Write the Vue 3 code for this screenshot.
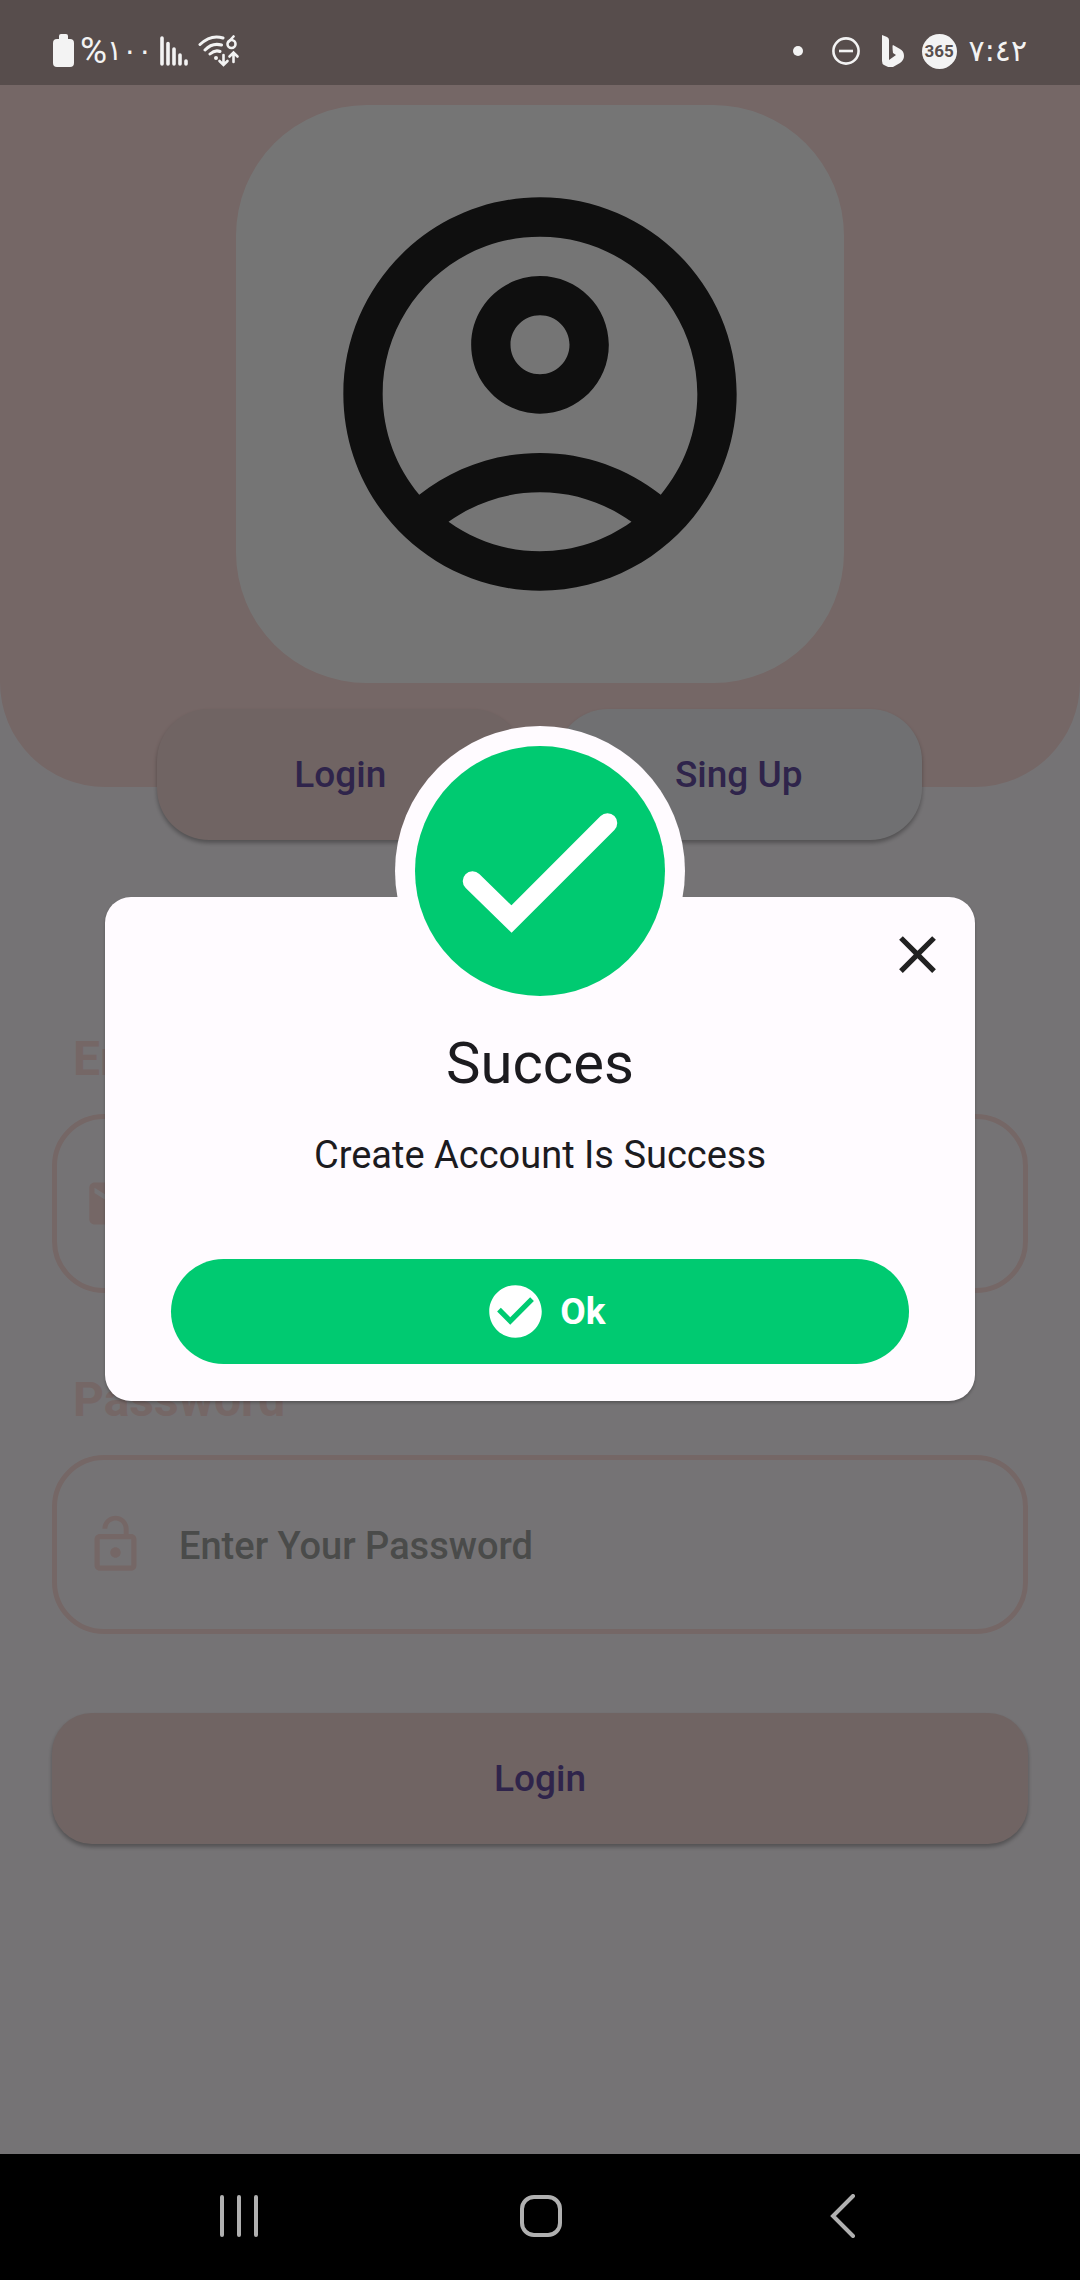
<script setup>
import { ref } from 'vue'

const dialogOpen = ref(true)
const email = ref('')
const password = ref('')
</script>

<template>
  <div class="phone">
    <div class="stage">
      <main class="page">
        <header class="hero">
          <div class="avatar">
            <svg class="avatar-icon" viewBox="0 0 24 24" aria-hidden="true">
              <path fill-rule="evenodd" d="M12 2C6.48 2 2 6.48 2 12s4.48 10 10 10 10-4.48 10-10S17.52 2 12 2zM7.35 18.5C8.66 17.56 10.26 17 12 17s3.34.56 4.65 1.5C15.34 19.44 13.74 20 12 20s-3.34-.56-4.65-1.5zm10.79-1.38C16.45 15.8 14.32 15 12 15s-4.45.8-6.14 2.12C4.7 15.73 4 13.95 4 12c0-4.42 3.58-8 8-8s8 3.58 8 8c0 1.95-.7 3.73-1.86 5.12z" />
              <path fill-rule="evenodd" d="M12 6c-1.93 0-3.5 1.57-3.5 3.5S10.07 13 12 13s3.5-1.57 3.5-3.5S13.93 6 12 6zm0 5c-.83 0-1.5-.67-1.5-1.5S11.17 8 12 8s1.5.67 1.5 1.5S12.83 11 12 11z" />
            </svg>
          </div>
        </header>

        <nav class="tabs">
          <button type="button" class="btn tab active">Login</button>
          <button type="button" class="btn tab">Sing Up</button>
        </nav>

        <form class="form" @submit.prevent>
          <div class="group">
            <label class="label" for="email">Email</label>
            <div class="field">
              <svg class="icon" viewBox="0 0 24 24" aria-hidden="true">
                <path d="M20 4H4c-1.100 0-1.990.9-1.990 2L2 18c0 1.100.9 2 2 2h16c1.100 0 2-.9 2-2V6c0-1.100-.9-2-2-2zm0 4l-8 5-8-5V6l8 5 8-5v2z" />
              </svg>
              <input id="email" v-model="email" type="email" placeholder="Enter Your Email" />
            </div>
          </div>
          <div class="group">
            <label class="label" for="password">Password</label>
            <div class="field">
              <svg class="icon" viewBox="0 0 24 24" aria-hidden="true">
                <path d="M12 17c1.100 0 2-.9 2-2s-.9-2-2-2-2 .9-2 2 .9 2 2 2zm6-9h-1V6c0-2.760-2.240-5-5-5S7 3.240 7 6h1.900c0-1.710 1.390-3.100 3.100-3.100s3.100 1.390 3.100 3.100v2H6c-1.100 0-2 .9-2 2v10c0 1.100.9 2 2 2h12c1.100 0 2-.9 2-2V10c0-1.100-.9-2-2-2zm0 12H6V10h12v10z" />
              </svg>
              <input id="password" v-model="password" type="password" placeholder="Enter Your Password" />
            </div>
          </div>
          <button type="submit" class="btn submit">Login</button>
        </form>
      </main>

      <div v-if="dialogOpen" class="scrim">
        <section class="dialog" role="dialog" aria-labelledby="dialog-title">
          <div class="badge">
            <svg viewBox="0 0 250 250" aria-hidden="true">
              <circle cx="125" cy="125" r="125" fill="#00ca71" />
              <path d="M57.500 135 L96.500 173 L192.500 77" fill="none" stroke="#fff" stroke-width="19.500" stroke-linecap="round" stroke-linejoin="miter" />
            </svg>
          </div>
          <button type="button" class="close" aria-label="Close" @click="dialogOpen = false">
            <svg class="icon" viewBox="0 0 24 24" aria-hidden="true">
              <path d="M19 6.410L17.590 5 12 10.590 6.410 5 5 6.410 10.590 12 5 17.590 6.410 19 12 13.410 17.590 19 19 17.590 13.410 12z" />
            </svg>
          </button>
          <h1 id="dialog-title" class="title">Succes</h1>
          <p class="desc">Create Account Is Success</p>
          <button type="button" class="ok" @click="dialogOpen = false">
            <svg class="icon" viewBox="0 0 24 24" aria-hidden="true">
              <path d="M12 2C6.480 2 2 6.480 2 12s4.480 10 10 10 10-4.480 10-10S17.520 2 12 2zm-2 15l-5-5 1.410-1.410L10 14.170l7.590-7.590L19 8l-9 9z" />
            </svg>
            <span>Ok</span>
          </button>
        </section>
      </div>

      <div class="status">
        <div class="status-side">
          <svg width="21" height="34" viewBox="0 0 21 34" aria-hidden="true">
            <path d="M6 5V2q0-2 2-2h5q2 0 2 2v3h2q4 0 4 4v20q0 4-4 4H4q-4 0-4-4V9q0-4 4-4z" fill="currentColor" />
          </svg>
          <span class="percent">%<span class="digits">١٠٠</span></span>
          <svg class="signal" width="28" height="30" viewBox="0 0 28 30" fill="none" stroke="currentColor" stroke-width="3.600" stroke-linecap="round" aria-hidden="true">
            <path d="M2 2v26M8 7.500v20.500M14 13v15M20 19v9M26 25v3" />
          </svg>
          <svg class="wifi" width="42" height="32" viewBox="0 0 42 32" fill="none" stroke="currentColor" stroke-width="2.600" stroke-linecap="round" aria-hidden="true">
            <path stroke-width="3" d="M2 9.500Q13-1 25 3M7 15q7-7.500 16.500-5M12 19q5-4.500 10-2.500" />
            <path d="M25.500 20v9M21.500 26l4 4 4-4M35.500 27V18M31.500 21.500l4-4 4 4" />
            <path d="M35.500 1.500L30.500 7" />
            <circle cx="33.500" cy="9" r="4" />
            <circle cx="18" cy="23" r="2" fill="currentColor" stroke="none" />
          </svg>
        </div>
        <div class="status-side">
          <span class="dot"></span>
          <svg class="dnd" width="28" height="28" viewBox="0 0 28 28" fill="none" stroke="currentColor" stroke-width="2.600" aria-hidden="true">
            <circle cx="14" cy="14" r="12.600" />
            <path d="M7 14h14" />
          </svg>
          <svg class="bing" width="22" height="32" viewBox="0 0 22 32" fill="currentColor" aria-hidden="true">
            <path d="M0 0l5 2q2 1 2 3v20l7-5-3-2q-1-8 0-8l7 4q4 2 4 7 0 4-4 7l-7 4q-4 1-7-1l-2-1q-2-1-2-4z" />
          </svg>
          <span class="app-badge">365</span>
          <span class="digits time">٧:٤٢</span>
        </div>
      </div>
    </div>

    <footer class="system-nav">
      <button type="button" aria-label="Recents">
        <svg width="44" height="44" viewBox="0 0 44 44" aria-hidden="true"><path d="M5 3v38M22 3v38M39 3v38" /></svg>
      </button>
      <button type="button" aria-label="Home">
        <svg width="44" height="44" viewBox="0 0 44 44" aria-hidden="true"><rect x="3" y="3" width="38" height="38" rx="12" /></svg>
      </button>
      <button type="button" aria-label="Back">
        <svg width="44" height="44" viewBox="0 0 44 44" aria-hidden="true"><path d="M33 2L13 22l20 20" /></svg>
      </button>
    </footer>
  </div>
</template>

<style>
body {
  margin: 0;
  background: #000;
}
</style>

<style scoped>
* {
  box-sizing: border-box;
}

.phone {
  display: flex;
  flex-direction: column;
  min-height: 100vh;
  font-family: Roboto, "Noto Sans", sans-serif;
}

button,
input {
  font-family: inherit;
  border: 0;
  padding: 0;
  margin: 0;
}

svg {
  display: block;
  flex: none;
}

.stage {
  position: relative;
  flex: 1;
  background: #fffbff;
}

.hero {
  display: flex;
  justify-content: center;
  padding: 105px 0 104px;
  background: #ffe0de;
  border-radius: 0 0 105px 105px;
}

.avatar {
  display: flex;
  align-items: center;
  justify-content: center;
  width: 608px;
  height: 578px;
  background: #fff;
  border-radius: 131px;
}

.avatar-icon {
  width: 472px;
  height: 472px;
  fill: #212121;
}

.btn {
  height: 131px;
  background: #f3d9d7;
  color: #6750a4;
  font-size: 37px;
  font-weight: 500;
  box-shadow: 0 3px 4px rgba(0, 0, 0, 0.3);
}

.tabs {
  display: flex;
  gap: 32px;
  margin-top: -78px;
  padding: 0 158px 0 157px;
}

.tab {
  flex: 1;
  background: #f5f5f8;
  border-radius: 52px;
}

.tab.active {
  background: #f3d9d7;
}

.form {
  display: flex;
  flex-direction: column;
  gap: 79px;
  margin-top: 191px;
  padding: 0 52px;
}

.group {
  display: flex;
  flex-direction: column;
  gap: 27px;
}

.label {
  padding-left: 21px;
  color: #ffe0de;
  font-size: 48px;
  font-weight: 700;
  line-height: 56px;
}

.field {
  display: flex;
  align-items: center;
  gap: 32px;
  height: 179px;
  padding: 0 27px;
  border: 5px solid #ffe0de;
  border-radius: 52px;
  color: #ffe0de;
}

.icon {
  width: 63px;
  height: 63px;
  fill: currentColor;
}

.field input {
  flex: 1;
  min-width: 0;
  padding-top: 2px;
  background: none;
  outline: none;
  color: #212121;
  font-size: 38px;
  font-weight: 500;
}

.field input::placeholder {
  color: #a1a3a1;
  opacity: 1;
}

.submit {
  border-radius: 40px;
}

.scrim {
  position: absolute;
  inset: 0;
  display: flex;
  align-items: center;
  padding: 144px 105px 0;
  background: rgba(0, 0, 0, 0.54);
}

.dialog {
  position: relative;
  display: flex;
  flex-direction: column;
  align-items: center;
  width: 100%;
  padding: 132px 66px 37px;
  background: #fffbff;
  border-radius: 26px;
  box-shadow: 0 2px 3px rgba(0, 0, 0, 0.25);
  color: #1c1b1f;
}

.badge {
  position: absolute;
  top: -171px;
  left: 50%;
  width: 290px;
  height: 290px;
  margin-left: -145px;
  padding: 20px;
  background: #fffbff;
  border-radius: 50%;
}

.close {
  position: absolute;
  top: 26px;
  right: 26px;
  background: none;
  color: #212121;
}

.title {
  margin: 0;
  font-size: 58px;
  font-weight: 400;
  line-height: 68px;
}

.desc {
  margin: 36px 0 82px;
  font-size: 38px;
  line-height: 44px;
}

.ok {
  display: flex;
  align-items: center;
  justify-content: center;
  gap: 13px;
  width: 100%;
  height: 105px;
  padding-left: 10px;
  background: #00ca71;
  border-radius: 53px;
  color: #fff;
  font-size: 37px;
  font-weight: 700;
}

.status {
  position: absolute;
  top: 0;
  left: 0;
  right: 0;
  display: flex;
  align-items: center;
  justify-content: space-between;
  height: 85px;
  padding: 17px 53px 0;
  background: rgba(0, 0, 0, 0.25);
  color: #f3f3f3;
}

.status-side {
  display: flex;
  align-items: center;
}

.percent {
  display: flex;
  align-items: center;
  margin-left: 6px;
  font-size: 37px;
  line-height: 34px;
}

.digits {
  font-family: "DejaVu Sans", sans-serif;
  font-size: 28px;
  line-height: 34px;
}

.digits.time {
  margin-left: 12px;
  font-size: 30px;
}

.signal {
  margin-left: 8px;
}

.wifi {
  margin-left: 10px;
}

.dot {
  width: 10px;
  height: 10px;
  border-radius: 50%;
  background: currentColor;
}

.dnd {
  margin-left: 29px;
}

.bing {
  margin-left: 22px;
}

.app-badge {
  display: flex;
  align-items: center;
  justify-content: center;
  width: 35px;
  height: 35px;
  margin-left: 18px;
  border-radius: 50%;
  background: #f3f3f3;
  color: #584e4c;
  font-size: 17px;
  font-weight: 700;
  line-height: 20px;
}

.system-nav {
  display: flex;
  align-items: center;
  justify-content: space-between;
  height: 126px;
  padding: 0 216px 2px 217px;
  background: #000;
}

.system-nav button {
  background: none;
}

.system-nav svg {
  fill: none;
  stroke: #b0b0b0;
  stroke-width: 4;
  stroke-linecap: round;
}
</style>
